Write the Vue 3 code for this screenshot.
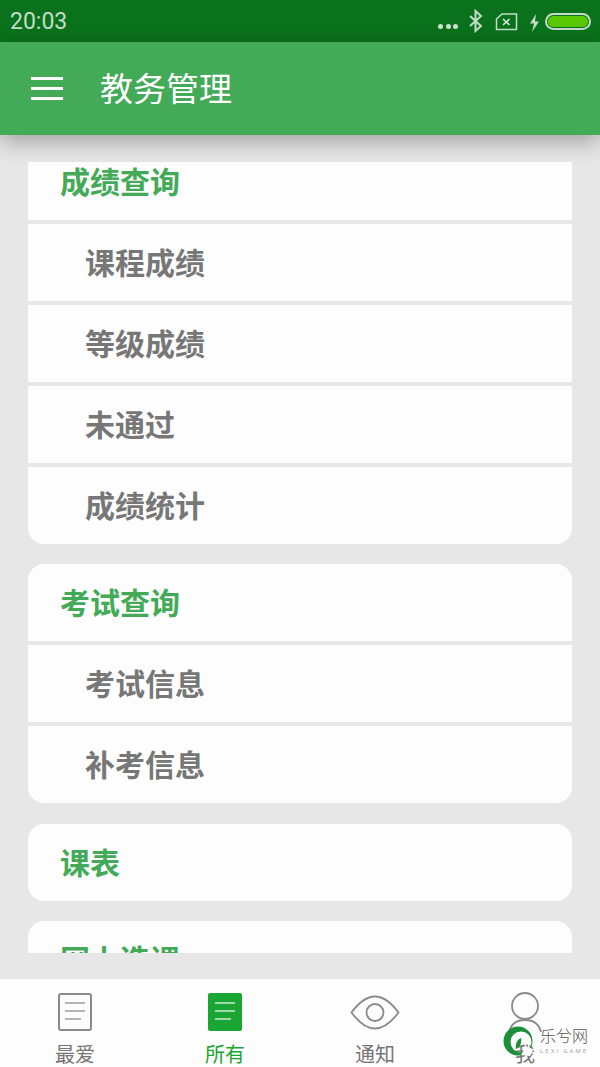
<template>
  <div class="page">
    <div class="status">
      <span class="time">20:03</span>
      <div class="status-icons">
        <span class="dots"><i></i><i></i><i></i></span>
        <svg width="16" height="24" viewBox="0 0 16 24" class="bt">
          <path d="M2 7 L13 17 L7.500 22 V2 L13 7 L2 17" fill="none" stroke="#c4dcc8" stroke-width="2" />
        </svg>
        <svg width="23" height="18" viewBox="0 0 23 18" class="sim">
          <path d="M7 1 H21.500 V16.500 H1.500 V6 Z" fill="none" stroke="#c4dcc8" stroke-width="1.500" />
          <path d="M8 6 L14.500 12 M14.500 6 L8 12" stroke="#d8e8da" stroke-width="1.600" />
        </svg>
        <svg width="11" height="18" viewBox="0 0 11 18" class="bolt">
          <path d="M7 0 L1 9.500 H5 L3 18 L10 7.500 H6 Z" fill="#c4dcc8" />
        </svg>
        <div class="battery"><div class="battery-fill"></div></div>
      </div>
    </div>

    <header class="topbar">
      <div class="menu"><i></i><i></i><i></i></div>
      <h1>教务管理</h1>
    </header>

    <div class="scroller">
      <div class="list">
        <section v-for="group in groups" :key="group.title" class="group">
          <div class="row head">{{ group.title }}</div>
          <div v-for="item in group.items" :key="item" class="row sub">{{ item }}</div>
        </section>
      </div>
    </div>

    <nav class="tabs">
      <div class="tab">
        <svg width="36" height="40" viewBox="0 0 36 40">
          <rect x="2" y="2" width="32" height="36" rx="2" fill="none" stroke="#8a8a8a" stroke-width="2" />
          <path d="M8 11 H28 M8 19 H28 M8 27 H24" stroke="#9a9a9a" stroke-width="1.500" />
        </svg>
        <span>最爱</span>
      </div>
      <div class="tab active">
        <svg width="36" height="40" viewBox="0 0 36 40">
          <rect x="1" y="1" width="34" height="38" rx="2" fill="#19a632" />
          <path d="M8 11 H28 M8 19 H28 M8 27 H24" stroke="#c9ecd0" stroke-width="1.500" />
        </svg>
        <span>所有</span>
      </div>
      <div class="tab">
        <svg width="50" height="40" viewBox="0 0 50 40">
          <path d="M1.500 20.500 C10 9 17 4.500 25 4.500 C33 4.500 40 9 48.500 20.500 C40 32 33 36.500 25 36.500 C17 36.500 10 32 1.500 20.500 Z" fill="none" stroke="#8a8a8a" stroke-width="1.800" />
          <circle cx="25" cy="20.500" r="8.500" fill="none" stroke="#8a8a8a" stroke-width="1.800" />
        </svg>
        <span>通知</span>
      </div>
      <div class="tab">
        <svg width="50" height="40" viewBox="0 0 50 40">
          <circle cx="25" cy="14" r="13" fill="none" stroke="#8a8a8a" stroke-width="1.800" />
          <path d="M9 40 C11 32 17 28 25 28 C33 28 39 32 41 40" fill="none" stroke="#8a8a8a" stroke-width="1.800" />
        </svg>
        <span>我</span>
      </div>
    </nav>

    <div class="mark">
      <svg width="30" height="30" viewBox="0 0 30 30">
        <path fill-rule="evenodd" d="M15 0.500 A14.500 14.500 0 1 0 15 29.500 A14.500 14.500 0 1 0 15 0.500 Z M18 5.500 A10.500 10.500 0 1 1 18 26.500 A10.500 10.500 0 1 1 18 5.500 Z" fill="#1c8f3a" />
        <path d="M23 20 L30 24 L27 30 L18 29 Z" fill="#fdfdfd" />
        <path d="M18 12 C14 14 12 18 13 23 C17 21 19 17 18 12 Z" fill="#1c8f3a" />
      </svg>
      <div class="mark-text">
        <span class="mark-cn">乐兮网</span>
        <span class="mark-en">LEXI GAME</span>
      </div>
    </div>
  </div>
</template>

<script setup>
const groups = [
  { title: '成绩查询', items: ['课程成绩', '等级成绩', '未通过', '成绩统计'] },
  { title: '考试查询', items: ['考试信息', '补考信息'] },
  { title: '课表', items: [] },
  { title: '网上选课', items: [] }
]
</script>

<style>
html,
body {
  margin: 0;
  padding: 0;
}
</style>

<style scoped>
.page {
  width: 600px;
  height: 1067px;
  position: relative;
  overflow: hidden;
  display: flex;
  flex-direction: column;
  background: #e7e7e7;
  font-family: "Noto Sans CJK SC", "Noto Sans", sans-serif;
}

.status {
  height: 42px;
  flex: none;
  display: flex;
  align-items: center;
  justify-content: space-between;
  padding: 0 9px 0 10px;
  background: #0a721c;
}

.time {
  font-family: Roboto, sans-serif;
  font-size: 23px;
  color: #c4dcc8;
}

.status-icons {
  display: flex;
  align-items: center;
}

.dots {
  display: flex;
  gap: 2.500px;
  margin-top: 10px;
  margin-right: 10px;
}

.dots i {
  width: 5px;
  height: 5px;
  border-radius: 50%;
  background: #d0e3d3;
}

.bt {
  margin-right: 11px;
}

.sim {
  margin-right: 11px;
  margin-top: 2px;
}

.bolt {
  margin-right: 5px;
  margin-top: 3px;
}

.battery {
  width: 46px;
  height: 17px;
  box-sizing: border-box;
  border: 2px solid #c4dcc8;
  border-radius: 9px;
  padding: 1px;
  margin-top: 1px;
}

.battery-fill {
  height: 100%;
  border-radius: 6px;
  background: #5ac804;
}

.topbar {
  height: 93px;
  flex: none;
  display: flex;
  align-items: center;
  position: relative;
  z-index: 2;
  background: #43aa57;
  box-shadow: 0 6px 22px rgba(0, 0, 0, 0.32);
}

.menu {
  width: 32px;
  margin-left: 31px;
  margin-right: 37px;
  display: flex;
  flex-direction: column;
  gap: 6.500px;
}

.menu i {
  height: 3.500px;
  background: #fff;
}

h1 {
  margin: 0 0 4px;
  font-size: 33px;
  font-weight: 400;
  color: #fff;
}

.scroller {
  height: 791px;
  flex: none;
  margin: 27px 28px 0;
  overflow: hidden;
}

.list {
  margin-top: -19px;
  display: flex;
  flex-direction: column;
  gap: 20.800px;
}

.group {
  display: flex;
  flex-direction: column;
  gap: 4.300px;
  border-radius: 16px;
  overflow: hidden;
}

.row {
  height: 76.700px;
  box-sizing: border-box;
  padding-bottom: 3px;
  display: flex;
  align-items: center;
  background: #fdfdfd;
  font-size: 30px;
  font-weight: 700;
}

.head {
  padding-left: 32px;
  color: #43aa57;
}

.sub {
  padding-left: 57px;
  color: #777;
}

.tabs {
  height: 88px;
  flex: none;
  margin-top: 26px;
  display: grid;
  grid-template-columns: repeat(4, 1fr);
  background: #fdfdfd;
}

.tab {
  display: flex;
  flex-direction: column;
  align-items: center;
  padding-top: 13px;
  font-size: 20px;
  color: #757575;
}

.tab span {
  margin-top: 10px;
  line-height: 24px;
}

.tab.active {
  color: #19a632;
}

.mark {
  position: absolute;
  left: 503px;
  top: 1026px;
  display: flex;
  gap: 7px;
}

.mark-text {
  display: flex;
  flex-direction: column;
  color: #555;
}

.mark-cn {
  font-size: 16px;
  line-height: 18px;
  font-weight: 300;
}

.mark-en {
  font-family: Roboto, sans-serif;
  font-size: 6px;
  letter-spacing: 2px;
  line-height: 8px;
  color: #aaa;
  margin-top: 3px;
}
</style>
